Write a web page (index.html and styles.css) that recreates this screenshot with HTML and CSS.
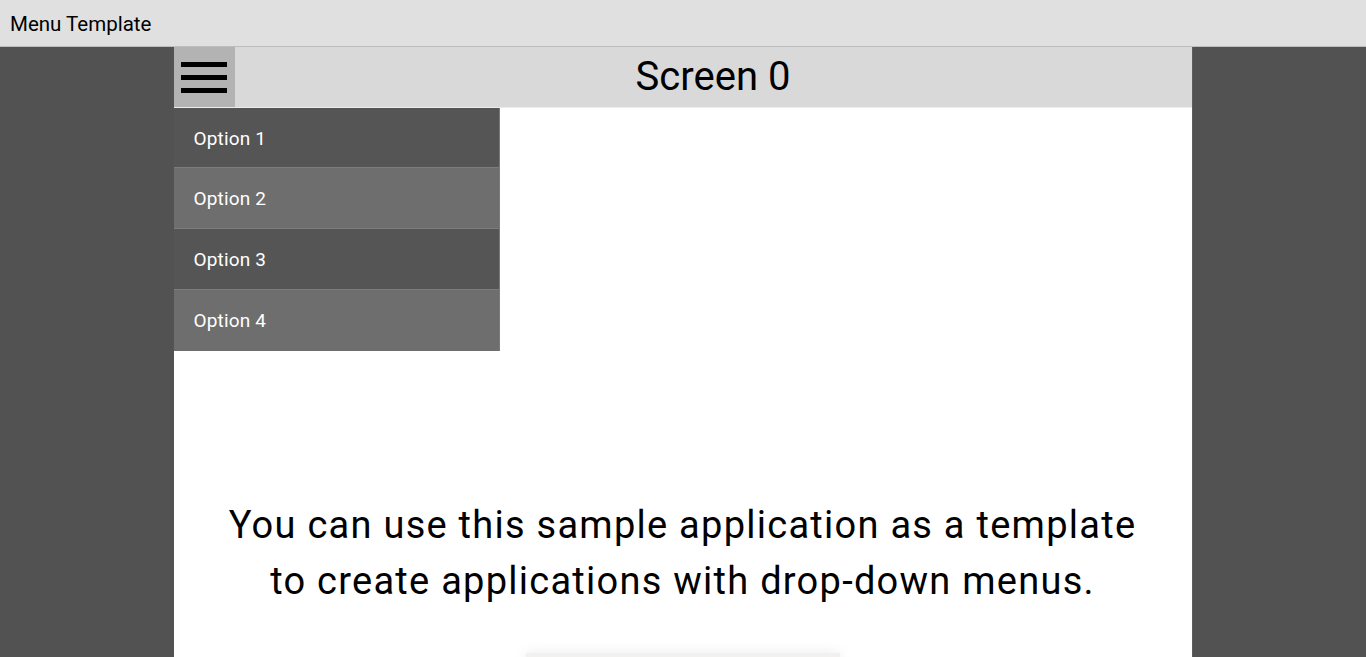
FILE: index.html
```html
<!DOCTYPE html>
<html>
<head>
<meta charset="utf-8">
<title>Menu Template</title>
<link rel="stylesheet" href="styles.css">
</head>
<body>
<div class="titlebar">Menu Template</div>
<div class="stage">
  <div class="panel">
    <div class="header">
      <div class="menu-btn">
        <svg width="46" height="31" viewBox="0 0 46 31"><rect x="0" y="0" width="46" height="5" fill="#000"/><rect x="0" y="13" width="46" height="5" fill="#000"/><rect x="0" y="26" width="46" height="5" fill="#000"/></svg>
      </div>
      <div class="screen-title">Screen 0</div>
    </div>
    <div class="content">
      <p class="intro">You can use this sample application as a template<br>to create applications with drop-down menus.</p>
      <div class="card"></div>
    </div>
    <ul class="dropdown">
      <li class="item dark">Option 1</li>
      <li class="item light">Option 2</li>
      <li class="item dark">Option 3</li>
      <li class="item light">Option 4</li>
    </ul>
  </div>
</div>
</body>
</html>
```
FILE: styles.css
```css
html, body {
  margin: 0;
  padding: 0;
  height: 100%;
  overflow: hidden;
  font-family: Roboto, "Liberation Sans", sans-serif;
}
body {
  background: #525252;
  display: flex;
  flex-direction: column;
}
.titlebar {
  height: 47px;
  box-sizing: border-box;
  background: #e0e0e0;
  border-bottom: 1px solid #bdbdbd;
  font-size: 20.5px;
  line-height: 46px;
  padding: 1px 0 0 10px;
  color: #000;
  flex: none;
}
.stage {
  flex: 1;
  display: flex;
  justify-content: center;
}
.panel {
  position: relative;
  width: 1018px;
  background: #fff;
  display: flex;
  flex-direction: column;
  border-right: 1px solid #5e5e5e;
}
.header {
  display: flex;
  height: 60px;
  background: #d9d9d9;
  border-bottom: 1px solid #ececec;
  flex: none;
}
.menu-btn {
  width: 61px;
  height: 60px;
  background: #b3b3b3;
  display: flex;
  align-items: center;
  padding-left: 7px;
  box-sizing: border-box;
}
.menu-btn svg {
  display: block;
}
.screen-title {
  flex: 1;
  text-align: center;
  font-size: 40px;
  line-height: 60px;
  color: #000;
}
.content {
  display: flex;
  flex-direction: column;
  align-items: center;
}
.intro {
  margin: 389px 0 0;
  font-size: 38px;
  letter-spacing: 1.26px;
  line-height: 56px;
  text-align: center;
  color: #000;
}
.card {
  margin-top: 44px;
  width: 314px;
  height: 40px;
  background: #f2f1ef;
  box-shadow: 0 0 14px rgba(0, 0, 0, 0.08);
}
.dropdown {
  position: absolute;
  top: 61px;
  left: 0;
  margin: 0;
  padding: 0;
  list-style: none;
  width: 325px;
  border-right: 1px solid #7a7a7a;
}
.item {
  height: 60px;
  box-sizing: border-box;
  line-height: 58px;
  padding: 2px 0 0 20px;
  font-size: 19px;
  letter-spacing: 0.15px;
  color: #fff;
  border-bottom: 1px solid #7c7c7c;
}
.item + .item {
  height: 61px;
}
.item:last-child {
  border-bottom: none;
}
.dark {
  background: #555555;
}
.light {
  background: #6e6e6e;
}
```
